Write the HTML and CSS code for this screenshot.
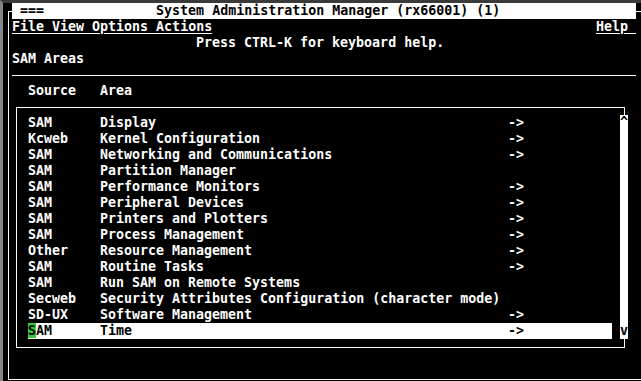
FILE: index.html
```
<!DOCTYPE html>
<html lang="en">
<head>
    <meta charset="UTF-8">
    <meta name="viewport" content="width=device-width, initial-scale=1.0">
    <title>SAM</title>
    <link rel="stylesheet" href="styles.css">
</head>
<body>
    <div class="screen">
        <div class="frame">
            <!-- Заголовок окна -->
            <div class="title-bar"> ===              System Administration Manager (rx66001) (1)</div>

            <!-- Меню -->
            <div class="menu-bar">
                <div class="menu-left">
                    <span class="menu-item">File </span><span class="menu-item">View </span><span class="menu-item">Options </span><span class="menu-item">Actions</span>
                </div>
                <span class="menu-item">Help </span>
            </div>

            <div class="row hint">Press CTRL-K for keyboard help.</div>
            <div class="row">SAM Areas</div>
            <div class="rule"></div>
            <div class="row col-head"><span>Source</span><span>Area</span></div>

            <!-- Список областей -->
            <div class="list-box">
                <div class="list">
                    <div class="item"><span>SAM</span><span>Display</span><span>-&gt;</span></div>
                    <div class="item"><span>Kcweb</span><span>Kernel Configuration</span><span>-&gt;</span></div>
                    <div class="item"><span>SAM</span><span>Networking and Communications</span><span>-&gt;</span></div>
                    <div class="item"><span>SAM</span><span>Partition Manager</span><span></span></div>
                    <div class="item"><span>SAM</span><span>Performance Monitors</span><span>-&gt;</span></div>
                    <div class="item"><span>SAM</span><span>Peripheral Devices</span><span>-&gt;</span></div>
                    <div class="item"><span>SAM</span><span>Printers and Plotters</span><span>-&gt;</span></div>
                    <div class="item"><span>SAM</span><span>Process Management</span><span>-&gt;</span></div>
                    <div class="item"><span>Other</span><span>Resource Management</span><span>-&gt;</span></div>
                    <div class="item"><span>SAM</span><span>Routine Tasks</span><span>-&gt;</span></div>
                    <div class="item"><span>SAM</span><span>Run SAM on Remote Systems</span><span></span></div>
                    <div class="item"><span>Secweb</span><span>Security Attributes Configuration (character mode)</span><span></span></div>
                    <div class="item"><span>SD-UX</span><span>Software Management</span><span>-&gt;</span></div>
                    <div class="item selected"><span><span class="cursor">S</span>AM</span><span>Time</span><span>-&gt;</span></div>
                </div>
                <div class="scrollbar">
                    <span>^</span>
                    <span>v</span>
                </div>
            </div>
        </div>
    </div>
</body>
</html>
```

FILE: styles.css
```
body {
    margin: 0;
    background: #000;
    color: #fff;
    font-family: "DejaVu Sans Mono", "Liberation Mono", monospace;
    font-size: 13.3px;
    font-weight: bold;
    line-height: 16px;
    overflow: hidden;
}

/* Экран терминала */
.screen {
    height: 378px;
    border-left: 3px solid #858585;
    border-top: 3px solid #3a3a3a;
}

/* Рамка вокруг экрана */
.frame {
    margin: 8px 0 0 5px;
    height: 367px;
    border: 1px solid #fff;
    border-right: none;
}

.title-bar {
    margin: -9px 0 0 3px;
    width: 624px;
    height: 16px;
    background: #fff;
    color: #000;
    white-space: pre;
}

.menu-bar {
    margin-left: 3px;
    width: 624px;
    height: 16px;
    display: flex;
    justify-content: space-between;
}

.menu-item {
    white-space: pre;
    text-decoration: underline;
    text-underline-offset: 2px;
}

.row {
    margin-left: 3px;
    height: 16px;
    white-space: pre;
}

.hint {
    padding-left: 184px;
}

.rule {
    margin: 0 0 7px 3px;
    width: 624px;
    height: 8px;
    border-bottom: 1px solid #fff;
}

.col-head {
    padding-left: 16px;
    display: grid;
    grid-template-columns: 72px 1fr;
}

/* Список */
.list-box {
    margin: 8px 0 0 7px;
    width: 596px;
    padding: 7px 0 8px 11px;
    border: 1px solid #fff;
    display: flex;
    gap: 8px;
}

.list {
    width: 584px;
}

.item {
    height: 16px;
    display: grid;
    grid-template-columns: 72px 408px 1fr;
    white-space: pre;
}

.item.selected {
    background: #fff;
    color: #000;
}

.cursor {
    background: #35c935;
}

.scrollbar {
    width: 8px;
    margin-right: -4px;
    background: #fff;
    color: #000;
    display: flex;
    flex-direction: column;
    justify-content: space-between;
}
```
